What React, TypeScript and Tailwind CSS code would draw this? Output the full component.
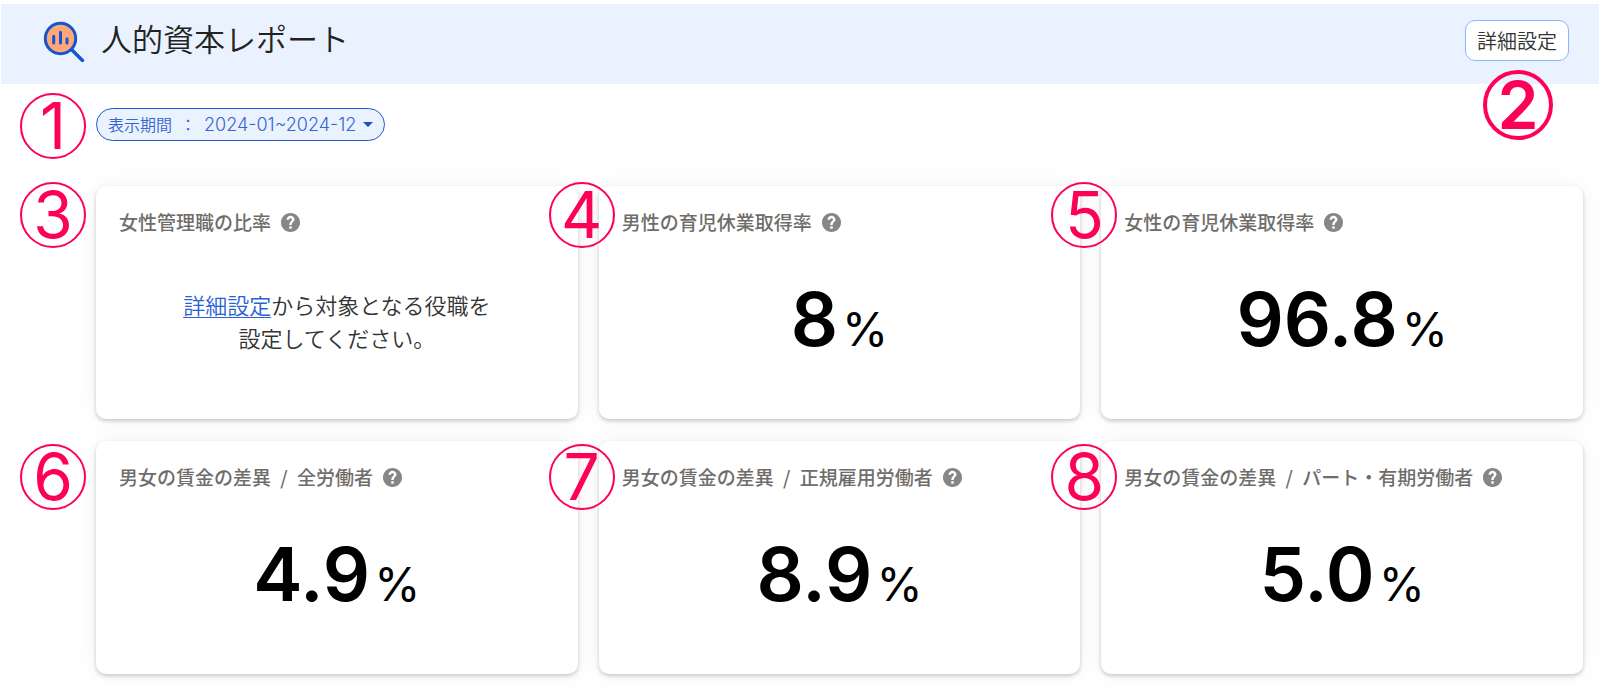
import { type ReactNode } from 'react';

const jp = "font-['Noto_Sans_CJK_JP',sans-serif]";

function Callout({ n, className, bold = false }: { n: number; className: string; bold?: boolean }) {
  return (
    <span
      className={`absolute z-10 flex items-center justify-center rounded-full border-[#ff0057] text-[#ff0057] pointer-events-none ${
        bold ? "size-[70px] border-4 text-[66px] font-semibold" : "size-[66px] border-2 text-[64px] font-normal"
      } font-['Inter','Noto_Sans_CJK_JP',sans-serif] leading-none ${className}`}
    >
      {n}
    </span>
  );
}

function ReportLogo() {
  return (
    <svg viewBox="0 0 42 42" className="size-[42px]" fill="none" strokeLinecap="round" aria-hidden="true">
      <circle cx="17.5" cy="18.5" r="15.2" fill="#ffa776" stroke="#1554cf" strokeWidth="3" />
      <path d="M29 30 39.500 40.500" stroke="#1554cf" strokeWidth="3.4" />
      <path d="M10.700 16.300v6.800M17.500 12.300v10.800M24 18.800v4.300" stroke="#1554cf" strokeWidth="3" />
    </svg>
  );
}

function HelpButton({ label }: { label: string }) {
  return (
    <button type="button" aria-label={label} className="text-[#888684]">
      <svg viewBox="2 2 20 20" className="size-[19px]" fill="currentColor" aria-hidden="true">
        <path
          fillRule="evenodd"
          d="M12 2C6.480 2 2 6.480 2 12s4.480 10 10 10 10-4.480 10-10S17.520 2 12 2zm1.300 16.500h-2.600v-2.500h2.600v2.500zm2.100-7.700-.9.920C13.700 12.500 13.300 13.200 13.300 14.600h-2.600v-.5c0-1.100.450-2.100 1.170-2.830l1.240-1.260c.3-.3.450-.650.450-1.050 0-.9-.650-1.560-1.560-1.560s-1.560.650-1.560 1.600H7.800c0-2.400 1.900-4.200 4.200-4.200s4.200 1.800 4.200 4.100c0 .8-.3 1.400-.8 1.900z"
        />
      </svg>
    </button>
  );
}

function Card({
  n,
  badge,
  title,
  scope,
  children,
}: {
  n: number;
  badge: string;
  title: string;
  scope?: string;
  children: ReactNode;
}) {
  return (
    <section className="relative flex h-[233px] flex-col rounded-[10px] bg-white px-[23px] pt-[21px] shadow-[0_2px_4px_rgba(0,0,0,0.2),0_0_24px_rgba(0,0,0,0.05)]">
      <Callout n={n} className={badge} />
      <div className="flex items-center gap-[10px]">
        <h2 className="text-[19px] leading-[30px] font-medium text-[#6f6d6a]">
          {title}
          {scope && (
            <>
              <span className="mx-[5px]">{' / '}</span>
              {scope}
            </>
          )}
        </h2>
        <HelpButton label={`${title}の説明`} />
      </div>
      {children}
    </section>
  );
}

function Metric({ value }: { value: string }) {
  return (
    <p className="flex items-baseline justify-center gap-1 pt-[37px] font-['Inter',sans-serif] text-black">
      <span className="text-[74px] leading-[90px] font-semibold">{value}</span>
      <span className="text-[47px] leading-[60px] font-normal">%</span>
    </p>
  );
}

export default function App() {
  return (
    <div className={`min-h-screen bg-white ${jp}`}>
      <header className="mx-px flex h-[84px] border-t-4 border-white bg-[#eaf2ff] pt-4 pr-[30px] pl-[42px]">
        <div className="flex h-[42px] items-start gap-4">
          <ReportLogo />
          <h1 className="text-[31px] leading-[36px] font-[350] text-[#222]">人的資本レポート</h1>
        </div>
        <div className="relative ml-auto">
          <button
            type="button"
            className="h-[41px] rounded-[10px] border border-[#8ab4ff] bg-white px-[11px] text-[20px] leading-[30px] font-[350] text-[#333]"
          >
            詳細設定
          </button>
          <Callout n={2} bold className="top-[50px] right-[16px]" />
        </div>
      </header>
      <main className="pt-6 pr-[17px] pb-3 pl-24">
        <div className="relative flex">
          <Callout n={1} className="top-[-15px] left-[-76px]" />
          <button
            type="button"
            className="flex h-[33px] items-center rounded-full border border-[#2257c9] bg-[#eaf2ff] px-[11px] text-[#3565cf]"
          >
            <span className="flex items-baseline leading-[24px] font-[350]">
              <span className="text-[16px]">表示期間</span>
              <span className="mx-2 text-[16px]">：</span>
              <span className="font-['Inter',sans-serif] text-[18px] font-light">2024-01~2024-12</span>
            </span>
            <svg viewBox="0 0 10 5" className="ml-[7px] h-[5px] w-[10px]" fill="#1b4fc4" aria-hidden="true">
              <path d="M0 0h10L5 5z" />
            </svg>
          </button>
        </div>
        <div className="mt-[45px] grid grid-cols-3 gap-x-[21px] gap-y-[22px]">
          <Card n={3} badge="top-[-4px] left-[-76px]" title="女性管理職の比率">
            <p className="pt-[51px] text-center text-[22px] leading-[33px] font-[350] text-[#333]">
              <a href="#settings" className="text-[#2a62d4] underline decoration-1 underline-offset-3">詳細設定</a>
              から対象となる役職を
              <br />
              設定してください。
            </p>
          </Card>
          <Card n={4} badge="top-[-4px] left-[-50px]" title="男性の育児休業取得率">
            <Metric value="8" />
          </Card>
          <Card n={5} badge="top-[-4px] left-[-50px]" title="女性の育児休業取得率">
            <Metric value="96.8" />
          </Card>
          <Card n={6} badge="top-[3px] left-[-76px]" title="男女の賃金の差異" scope="全労働者">
            <Metric value="4.9" />
          </Card>
          <Card n={7} badge="top-[3px] left-[-50px]" title="男女の賃金の差異" scope="正規雇用労働者">
            <Metric value="8.9" />
          </Card>
          <Card n={8} badge="top-[3px] left-[-50px]" title="男女の賃金の差異" scope="パート・有期労働者">
            <Metric value="5.0" />
          </Card>
        </div>
      </main>
    </div>
  );
}
